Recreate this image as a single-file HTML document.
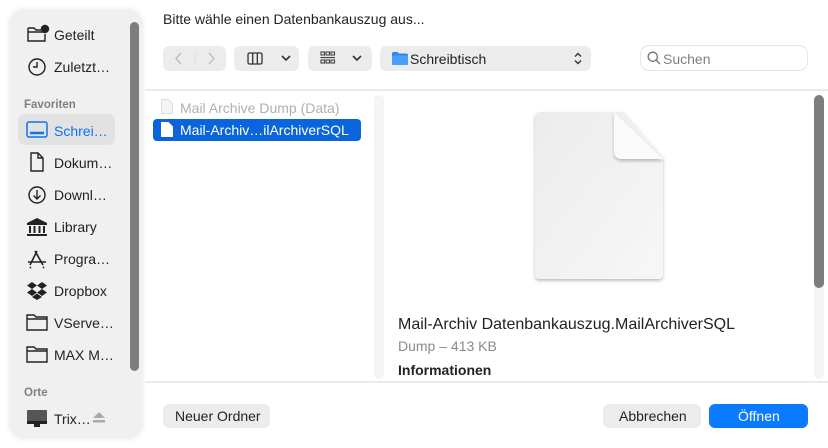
<!DOCTYPE html>
<html><head><meta charset="utf-8"><style>
*{margin:0;padding:0;box-sizing:border-box}
body{width:828px;height:448px;background:#fff;font-family:"Liberation Sans",sans-serif;position:relative;overflow:hidden;color:#222}
.a{position:absolute}
.side{left:10px;top:10px;width:132px;height:428px;background:#f0f0f0;border-radius:14px;box-shadow:0 0 6px rgba(0,0,0,.12)}
.it{position:absolute;left:54px;font-size:14px;color:#222;line-height:16px}
.ic{position:absolute;left:26px}
.hd{position:absolute;left:24px;font-size:11.5px;color:#808080;font-weight:bold}
.btn{position:absolute;background:#ececec;border-radius:6px}
.t{position:absolute;font-size:14px;white-space:nowrap}
</style></head><body>
<div class="a side"></div>
<div class="a" style="left:130px;top:22px;width:9px;height:349px;background:#7d7d7d;border-radius:5px"></div>
<div class="a" style="left:18px;top:114px;width:97px;height:31px;background:#e2e2e2;border-radius:7px"></div>

<svg class="ic" style="top:24px" width="24" height="20" viewBox="0 0 24 20" fill="none" stroke="#222" stroke-width="1.4"><path d="M2 4h6l2 2h5M2 4v13h17V10"/><path d="M2 8h17"/><circle cx="19" cy="5" r="3.5" fill="#222"/></svg>
<div class="it" style="top:27px">Geteilt</div>
<svg class="ic" style="top:57px;left:27px" width="20" height="20" viewBox="0 0 20 20" fill="none" stroke="#222" stroke-width="1.4"><circle cx="10" cy="10" r="8"/><path d="M10 5v5H6"/></svg>
<div class="it" style="top:59px">Zuletzt…</div>
<div class="hd" style="top:99px">Favoriten</div>
<svg class="ic" style="top:121px" width="22" height="17" viewBox="0 0 22 17" fill="none" stroke="#0a74f5" stroke-width="1.5"><rect x="1" y="1" width="20" height="15" rx="2"/><path d="M4 12h14" stroke-width="2.5"/></svg>
<div class="it" style="top:123px;color:#0a74f5">Schrei…</div>
<svg class="ic" style="top:152px;left:29px" width="16" height="20" viewBox="0 0 16 20" fill="none" stroke="#222" stroke-width="1.4"><path d="M2 1h7l5 5v13H2z"/><path d="M9 1v5h5"/></svg>
<div class="it" style="top:155px">Dokum…</div>
<svg class="ic" style="top:185px;left:27px" width="20" height="20" viewBox="0 0 20 20" fill="none" stroke="#222" stroke-width="1.4"><circle cx="10" cy="10" r="8"/><path d="M10 5v9M6.5 10.5 10 14l3.5-3.5"/></svg>
<div class="it" style="top:187px">Downl…</div>
<svg class="ic" style="top:217px" width="22" height="20" viewBox="0 0 22 20" fill="#222"><path d="M11 1 1 6v2h20V6z"/><rect x="3" y="9" width="2" height="7"/><rect x="7.5" y="9" width="2" height="7"/><rect x="12.5" y="9" width="2" height="7"/><rect x="17" y="9" width="2" height="7"/><rect x="1" y="17" width="20" height="2"/></svg>
<div class="it" style="top:219px">Library</div>
<svg class="ic" style="top:249px" width="22" height="20" viewBox="0 0 22 20" fill="none" stroke="#222" stroke-width="1.6"><path d="M11 2 4 16M9 2l8 14M2 13h18M5 18l-1 1M17 18l1 1"/></svg>
<div class="it" style="top:251px">Progra…</div>
<svg class="ic" style="top:281px" width="22" height="20" viewBox="0 0 22 20" fill="#222"><path d="M6 1 1 4.5 6 8l5-3.5zM16 1l-5 3.5L16 8l5-3.5zM1 11.5 6 15l5-3.5L6 8zM21 11.5 16 15l-5-3.5L16 8zM6 16l5 3 5-3-5-3.5z"/></svg>
<div class="it" style="top:283px">Dropbox</div>
<svg class="ic" style="top:313px" width="22" height="18" viewBox="0 0 22 18" fill="none" stroke="#222" stroke-width="1.4"><path d="M1 2h7l2 2h11v13H1z"/><path d="M1 6h20"/></svg>
<div class="it" style="top:315px">VServe…</div>
<svg class="ic" style="top:345px" width="22" height="18" viewBox="0 0 22 18" fill="none" stroke="#222" stroke-width="1.4"><path d="M1 2h7l2 2h11v13H1z"/><path d="M1 6h20"/></svg>
<div class="it" style="top:347px">MAX M…</div>
<div class="hd" style="top:387px">Orte</div>
<svg class="ic" style="top:409px" width="22" height="20" viewBox="0 0 22 20"><rect x="1" y="1" width="20" height="13" rx="1" fill="#555"/><rect x="1" y="12" width="20" height="3" fill="#222"/><path d="M8 15h6v3H8z" fill="#222"/></svg>
<div class="it" style="top:411px">Trix…</div>
<svg class="a" style="left:93px;top:412px" width="12" height="11" viewBox="0 0 12 11" fill="#aaa"><path d="M6 0 12 6H0z"/><rect y="8" width="12" height="2.5"/></svg>

<div class="t" style="left:163px;top:11px;color:#222">Bitte wähle einen Datenbankauszug aus...</div>

<div class="btn" style="left:163px;top:46px;width:63px;height:25px"></div>
<svg class="a" style="left:172px;top:51px" width="46" height="15" viewBox="0 0 46 15" fill="none" stroke="#c0c0c0" stroke-width="1.5"><path d="M9 2 4 7.5 9 13M37 2l5 5.5L37 13"/><path d="M23 2v11" stroke="#ddd" stroke-width="1"/></svg>
<div class="btn" style="left:234px;top:46px;width:65px;height:25px"></div>
<svg class="a" style="left:247px;top:51px" width="46" height="15" viewBox="0 0 46 15" fill="none" stroke="#333" stroke-width="1.3"><rect x="1" y="2" width="14" height="11" rx="1.5"/><path d="M5.7 2v11M10.3 2v11"/><path d="M35 5l4 4 4-4" stroke-width="1.6"/></svg>
<div class="btn" style="left:308px;top:46px;width:64px;height:25px"></div>
<svg class="a" style="left:320px;top:51px" width="46" height="15" viewBox="0 0 46 15" fill="none" stroke="#444" stroke-width="1.1"><rect x="1" y="1" width="3.5" height="3" /><rect x="6" y="1" width="3.5" height="3"/><rect x="11" y="1" width="3.5" height="3"/><rect x="1" y="6.5" width="13.5" height="0.1"/><rect x="1" y="9" width="3.5" height="3"/><rect x="6" y="9" width="3.5" height="3"/><rect x="11" y="9" width="3.5" height="3"/><path d="M33 5l4 4 4-4" stroke="#333" stroke-width="1.6"/></svg>
<div class="btn" style="left:380px;top:46px;width:211px;height:25px"></div>
<svg class="a" style="left:392px;top:52px" width="16" height="13" viewBox="0 0 16 13"><path d="M0 1.5C0 .7.7 0 1.5 0h4l1.5 1.5h7.5c.8 0 1.5.7 1.5 1.5v8.5c0 .8-.7 1.5-1.5 1.5h-13C.7 13 0 12.3 0 11.5z" fill="#2f86f0"/><rect x="0" y="3.5" width="16" height="9.5" rx="1.5" fill="#4a9df8"/></svg>
<div class="t" style="left:410px;top:51px;color:#222">Schreibtisch</div>
<svg class="a" style="left:573px;top:51px" width="10" height="15" viewBox="0 0 10 15" fill="none" stroke="#333" stroke-width="1.4"><path d="M2 5.5 5 2.5 8 5.5M2 9.5l3 3 3-3"/></svg>
<div class="a" style="left:640px;top:45px;width:168px;height:26px;border:1px solid #e6e6e6;border-radius:9px"></div>
<svg class="a" style="left:647px;top:51px" width="14" height="14" viewBox="0 0 14 14" fill="none" stroke="#777" stroke-width="1.4"><circle cx="5.8" cy="5.8" r="4.6"/><path d="M9.2 9.2 13 13"/></svg>
<div class="t" style="left:663px;top:51px;color:#808080">Suchen</div>

<div class="a" style="left:145px;top:89px;width:683px;height:2px;background:#ebebeb"></div>
<div class="a" style="left:145px;top:381px;width:683px;height:2px;background:#ebebeb"></div>

<svg class="a" style="left:161px;top:99px" width="12" height="15" viewBox="0 0 12 15" fill="#f4f4f4" stroke="#ddd" stroke-width="1"><path d="M.5.5h7l4 4v10H.5z"/></svg>
<div class="t" style="left:180px;top:100px;color:#b0b0b0">Mail Archive Dump (Data)</div>
<div class="a" style="left:153px;top:119px;width:208px;height:22px;background:#0a64db;border-radius:4px"></div>
<svg class="a" style="left:161px;top:122px" width="12" height="15" viewBox="0 0 12 15" fill="#fff"><path d="M0 0h7.5L12 4.5V15H0z"/></svg>
<div class="t" style="left:180px;top:122px;color:#fff">Mail-Archiv…ilArchiverSQL</div>
<div class="a" style="left:374px;top:95px;width:10px;height:284px;background:#f5f5f5;border-radius:5px"></div>
<div class="a" style="left:814px;top:95px;width:10px;height:284px;background:#f5f5f5;border-radius:5px"></div>
<div class="a" style="left:814px;top:95px;width:10px;height:193px;background:#7d7d7d;border-radius:5px"></div>

<svg class="a" style="left:530px;top:107px" width="140" height="180" viewBox="0 0 140 180">
<defs><linearGradient id="g" x1="0" y1="0" x2="1" y2="1"><stop offset="0" stop-color="#ececec"/><stop offset="1" stop-color="#f7f7f7"/></linearGradient>
<filter id="s"><feDropShadow dx="0" dy="2" stdDeviation="1.5" flood-color="#000" flood-opacity=".25"/></filter></defs>
<path d="M10 5h84l39 45v117c0 3-2 5-5 5H10c-3 0-5-2-5-5V10c0-3 2-5 5-5z" fill="url(#g)" filter="url(#s)"/>
<path d="M84 5 133 52H92c-5 0-8-3-8-8z" fill="#fafafa" filter="url(#s)"/>
</svg>

<div class="a" style="left:398px;top:316px;font-size:16px;color:#222">Mail-Archiv Datenbankauszug.MailArchiverSQL</div>
<div class="a" style="left:398px;top:338px;font-size:14px;color:#8a8a8a">Dump – 413 KB</div>
<div class="a" style="left:398px;top:362px;font-size:14px;font-weight:bold;color:#222">Informationen</div>

<div class="btn" style="left:163px;top:404px;width:107px;height:24px"></div>
<div class="t" style="left:175px;top:408px;font-size:14px">Neuer Ordner</div>
<div class="btn" style="left:603px;top:404px;width:98px;height:24px"></div>
<div class="t" style="left:619px;top:408px;font-size:14px">Abbrechen</div>
<div class="a" style="left:709px;top:404px;width:99px;height:24px;background:#0a7aff;border-radius:6px"></div>
<div class="t" style="left:738px;top:408px;font-size:14px;color:#fff">Öffnen</div>
</body></html>
